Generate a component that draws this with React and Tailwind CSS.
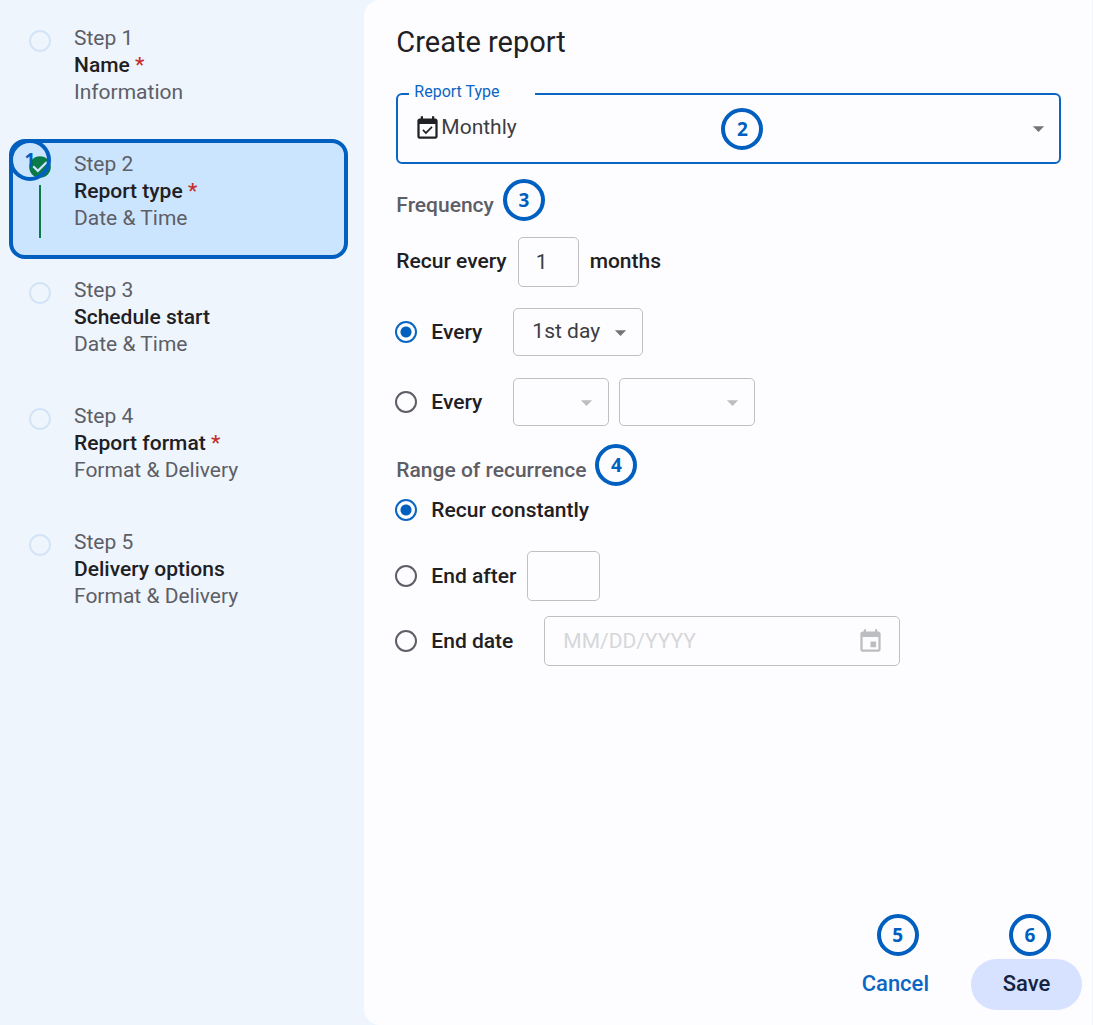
import { useState } from "react";
import { MdArrowDropDown, MdCheckCircle, MdEvent, MdEventAvailable } from "react-icons/md";

const steps = [
  { id: 1, name: "Name", detail: "Information", required: true },
  { id: 2, name: "Report type", detail: "Date & Time", required: true },
  { id: 3, name: "Schedule start", detail: "Date & Time", required: false },
  { id: 4, name: "Report format", detail: "Format & Delivery", required: true },
  { id: 5, name: "Delivery options", detail: "Format & Delivery", required: false },
];

const boxClass = "rounded-[5px] border border-[#bfc0c4] bg-transparent outline-none";
const radioClass =
  "size-[22px] shrink-0 appearance-none rounded-full border-2 border-[#5d5e66] checked:border-[#0b66c3] checked:bg-[radial-gradient(circle,#005fbf_5px,transparent_6px)]";

const Badge = ({ number, className }) => (
  <span
    className={`pointer-events-none absolute flex size-[42px] items-center justify-center rounded-full border-4 border-[#005fbf] font-['Noto_Sans',sans-serif] text-[19px] leading-6 font-bold text-[#005fbf] ${className}`}
  >
    {number}
  </span>
);

const Step = ({ step, active, onSelect }) => (
  <li>
    <button
      type="button"
      onClick={onSelect}
      aria-current={active ? "step" : undefined}
      className={`relative flex h-[120px] w-full gap-[23px] rounded-2xl border-4 pt-2 pl-4 text-left ${
        active ? "border-[#005fbf] bg-[#cce5ff]" : "border-transparent"
      }`}
    >
      <span className={`flex w-[22px] shrink-0 flex-col items-center ${active ? "pt-[3px]" : "pt-[5px]"}`}>
        {active ? (
          <>
            <MdCheckCircle className="size-[26px] shrink-0 text-[#0a7a48]" />
            <span className="mt-[5px] h-[53px] w-[2px] bg-[#0a7a48]" />
          </>
        ) : (
          <span className="size-[22px] rounded-full border-2 border-[#d3e4f7]" />
        )}
      </span>
      <span className="flex flex-col text-[21px] leading-[27px] text-[#5d5e66]">
        <span>Step {step.id}</span>
        <span className="font-medium text-[#1f2023]">
          {step.name} {step.required && <span className="text-[#c5302c]">*</span>}
        </span>
        <span>{step.detail}</span>
      </span>
      {active && <Badge number={1} className="-top-1 -left-1" />}
    </button>
  </li>
);

const SmallSelect = ({ label, options, disabled, className }) => (
  <div className={`relative ${className}`}>
    <select
      aria-label={label}
      disabled={disabled}
      className={`size-full appearance-none pl-[18px] text-[#3c3d42] ${boxClass}`}
    >
      {options.map((el) => (
        <option key={el}>{el}</option>
      ))}
    </select>
    <MdArrowDropDown
      className={`pointer-events-none absolute inset-y-0 right-[9px] my-auto size-[27px] ${
        disabled ? "text-[#bcbdc0]" : "text-[#747579]"
      }`}
    />
  </div>
);

const SectionTitle = ({ children, badge }) => (
  <h2 className="relative w-fit leading-7 font-medium text-[#5d5e66]">
    {children}
    <Badge number={badge} className="-top-3 left-full ml-[9px]" />
  </h2>
);

const RadioLabel = ({ name, value, current, onChange, children }) => (
  <label className="-ml-px flex items-center gap-[14px] leading-7">
    <input
      type="radio"
      name={name}
      checked={current === value}
      onChange={() => onChange(value)}
      className={radioClass}
    />
    {children}
  </label>
);

export default function App() {
  const [activeStep, setActiveStep] = useState(2);
  const [every, setEvery] = useState("day");
  const [range, setRange] = useState("constantly");

  return (
    <div className="flex min-h-screen bg-[#eef5fd] font-[Roboto,sans-serif]">
      <nav aria-label="Steps" className="w-1/3 shrink-0 pt-[13px] pr-4 pl-[9px]">
        <ol className="flex flex-col gap-1.5">
          {steps.map((step) => (
            <Step
              key={step.id}
              step={step}
              active={step.id === activeStep}
              onSelect={() => setActiveStep(step.id)}
            />
          ))}
        </ol>
      </nav>

      <form
        className="flex grow flex-col rounded-l-2xl border-r border-[#f3f4f8] bg-[#fdfdff] pt-6 text-[21px] font-medium text-[#1f2023]"
        onSubmit={(e) => e.preventDefault()}
      >
        <div className="pr-[31px] pl-8">
          <h1 className="text-[29px] leading-9 font-normal">Create report</h1>

          <fieldset className="relative mt-[22px] flex items-center rounded-md border-2 border-[#0b66c3] pr-[7px] pb-3 pl-4">
            <legend className="-ml-[5px] w-[126px] pb-1 pl-[5px] text-base leading-5 font-normal text-[#0b66c3]">
              <label htmlFor="reportType">Report Type</label>
            </legend>
            <MdEventAvailable className="size-[27px] shrink-0" />
            <select
              id="reportType"
              className="h-11 grow appearance-none bg-transparent font-normal text-[#3c3d42] outline-none"
            >
              <option>Monthly</option>
            </select>
            <MdArrowDropDown className="pointer-events-none size-[27px] shrink-0 text-[#747579]" />
            <Badge number={2} className="top-[2px] left-[323px]" />
          </fieldset>

          <div className="mt-[27px]">
            <SectionTitle badge={3}>Frequency</SectionTitle>
          </div>
          <div className="mt-[18px] flex items-center gap-[11px]">
            <label htmlFor="interval">Recur every</label>
            <input
              id="interval"
              type="text"
              defaultValue="1"
              className={`h-[50px] w-[61px] pl-[17px] font-normal text-[#3c3d42] ${boxClass}`}
            />
            <span>months</span>
          </div>
          <div className="mt-[21px] flex items-center">
            <div className="w-[117px]">
              <RadioLabel name="every" value="day" current={every} onChange={setEvery}>
                Every
              </RadioLabel>
            </div>
            <SmallSelect label="Day of month" options={["1st day"]} className="h-12 w-[130px] font-normal" />
          </div>
          <div className="mt-[22px] flex items-center">
            <div className="w-[117px]">
              <RadioLabel name="every" value="week" current={every} onChange={setEvery}>
                Every
              </RadioLabel>
            </div>
            <div className="flex gap-[10px]">
              <SmallSelect label="Week of month" options={[""]} disabled className="h-12 w-24" />
              <SmallSelect label="Day of week" options={[""]} disabled className="h-12 w-[136px]" />
            </div>
          </div>

          <div className="mt-[30px]">
            <SectionTitle badge={4}>Range of recurrence</SectionTitle>
          </div>
          <div className="mt-3">
            <RadioLabel name="range" value="constantly" current={range} onChange={setRange}>
              Recur constantly
            </RadioLabel>
          </div>
          <div className="mt-[27px] flex items-center gap-[11px]">
            <RadioLabel name="range" value="after" current={range} onChange={setRange}>
              End after
            </RadioLabel>
            <input
              type="text"
              aria-label="Number of occurrences"
              className={`h-[50px] w-[73px] px-4 font-normal ${boxClass}`}
            />
          </div>
          <div className="mt-[15px] flex items-center">
            <div className="w-[148px]">
              <RadioLabel name="range" value="date" current={range} onChange={setRange}>
                End date
              </RadioLabel>
            </div>
            <div className="relative w-[356px]">
              <input
                type="text"
                aria-label="End date"
                placeholder="MM/DD/YYYY"
                className={`h-[50px] w-full pl-[18px] font-normal placeholder:text-[#d6d7da] ${boxClass}`}
              />
              <MdEvent className="pointer-events-none absolute inset-y-0 right-4 my-auto size-[27px] text-[#bcbdc0]" />
            </div>
          </div>
        </div>

        <div className="mt-auto flex justify-end gap-4 pt-16 pr-[10px] pb-[15px] text-[22px]">
          <button type="button" className="relative h-[51px] px-[26px] pb-[3px] text-[#0b66c3]">
            Cancel
            <Badge number={5} className="-top-[45px] left-[41px]" />
          </button>
          <button
            type="submit"
            className="relative h-[51px] w-[111px] rounded-full bg-[#d6e2ff] pb-[3px] text-[#14233f]"
          >
            Save
            <Badge number={6} className="-top-[45px] left-[38px]" />
          </button>
        </div>
      </form>
    </div>
  );
}
